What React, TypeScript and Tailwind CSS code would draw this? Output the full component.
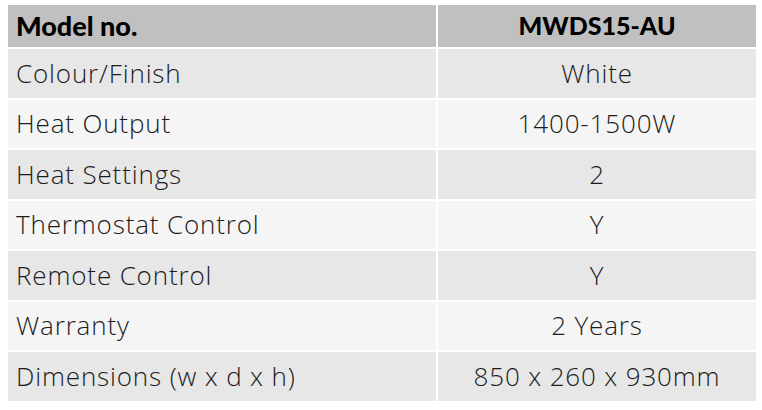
const rows: [string, string][] = [
  ["Colour/Finish", "White"],
  ["Heat Output", "1400-1500W"],
  ["Heat Settings", "2"],
  ["Thermostat Control", "Y"],
  ["Remote Control", "Y"],
  ["Warranty", "2 Years"],
  ["Dimensions (w x d x h)", "850 x 260 x 930mm"],
];

export default function App() {
  return (
    <div className="h-[410px] w-[762px] bg-white pl-[8px] pt-[5px] text-[#1c1c1c]">
      <div className="grid w-[748px] grid-cols-[428px_318px] gap-[2px]">
        <div className="flex h-[42px] items-center bg-[#c0c0c1] pl-[8px] font-['Lato',sans-serif] text-[27px] font-black text-black">
          Model no.
        </div>
        <div className="flex h-[42px] items-center justify-center bg-[#c0c0c1] font-['Lato',sans-serif] text-[25px] font-black text-black">
          MWDS15-AU
        </div>
        {rows.map(([label, value], i) => {
          const bg = i % 2 === 0 ? "bg-[#e7e7e8]" : "bg-[#f5f5f5]";
          return [
            <div key={label} className={`flex h-[48.5px] items-center pl-[8px] font-['Open_Sans',sans-serif] text-[26px] font-light tracking-[0.85px] ${bg}`}>
              {label}
            </div>,
            <div key={label + "v"} className={`flex h-[48.5px] items-center justify-center font-['Open_Sans',sans-serif] text-[26px] font-light tracking-[0.85px] ${bg}`}>
              {value}
            </div>,
          ];
        })}
      </div>
    </div>
  );
}
